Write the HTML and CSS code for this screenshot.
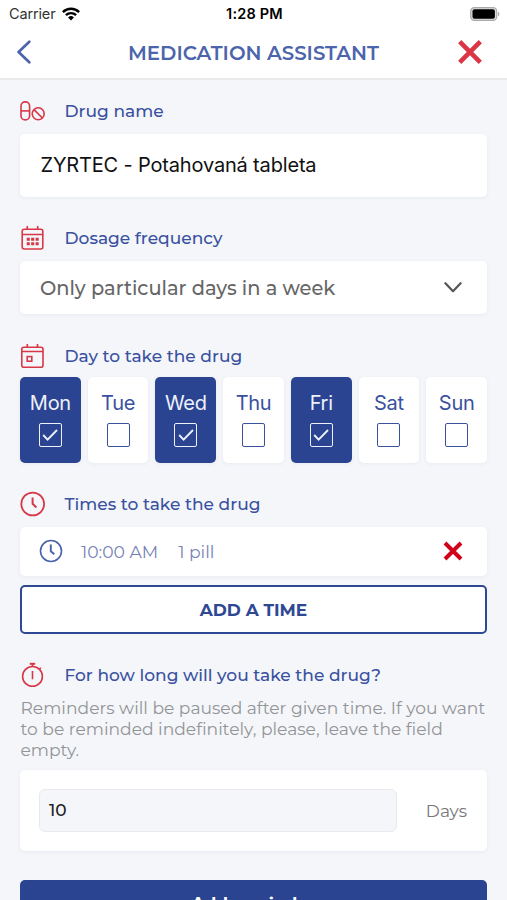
FILE: index.html
```html
<!DOCTYPE html>
<html lang="en">
<head>
<meta charset="utf-8">
<title>Medication assistant</title>
<link rel="stylesheet" href="styles.css">
</head>
<body>
<div class="screen">
  <header class="header">
    <div class="status">
      <div class="carrier">
        <span>Carrier</span>
        <svg width="18" height="14" viewBox="0 0 18 14" fill="none" stroke="#000" stroke-width="2.4"><path d="M.9 5.1a11.5 11.5 0 0 1 16.2 0M3.9 8.2a7.2 7.2 0 0 1 10.2 0"/><path d="M9 13.4 6.1 10.5a4.2 4.2 0 0 1 5.8 0z" fill="#000" stroke="none"/></svg>
      </div>
      <span class="clock">1:28 PM</span>
      <svg class="battery" width="30" height="14" viewBox="0 0 30 14"><rect x=".7" y=".7" width="26" height="12.6" rx="3.6" fill="#ddd" stroke="#aaa" stroke-width="1.2"/><rect x="2.5" y="2.3" width="22.4" height="9.4" rx="2" fill="#000"/><path d="M28 4.7c1.8.7 1.8 3.9 0 4.6z" fill="#aaa"/></svg>
    </div>
    <div class="nav">
      <svg class="back" width="16" height="24" viewBox="0 0 16 24" fill="none" stroke="#4c64ab" stroke-width="2.7" stroke-linecap="round" stroke-linejoin="round"><path d="M13.3 1.8 2.6 12l10.7 10.2"/></svg>
      <h1>MEDICATION ASSISTANT</h1>
      <svg width="24" height="24" viewBox="0 0 24 24" stroke="#dc3545" stroke-width="4.6"><path d="M1.7 1.7l20.6 20.6M22.3 1.7 1.7 22.3"/></svg>
    </div>
  </header>
  <main class="form">
    <h2 class="label label-drug">
      <svg width="25" height="20" viewBox="0 0 25 20" fill="none" stroke="#d73747" stroke-width="1.6"><rect x="1" y=".9" width="8.6" height="18" rx="4.2"/><path d="M1 9.9h8.6"/><circle cx="18.2" cy="12.8" r="6"/><path d="m14 8.6 8.4 8.4"/></svg>
      <span>Drug name</span>
    </h2>
    <div class="card drug">ZYRTEC - Potahovaná tableta</div>

    <h2 class="label label-frequency">
      <svg width="25" height="26" viewBox="0 0 25 26" fill="none" stroke="#d73747" stroke-width="1.6"><rect x="2.2" y="4.2" width="20.6" height="19.8" rx="2"/><path d="M2.2 9.5h20.6M7.3 1v3.2M17.7 1v3.2"/><path d="M6.7 14.3h12M6.7 18.8h12" stroke-width="3.1" stroke-dasharray="3.1 1.35"/></svg>
      <span>Dosage frequency</span>
    </h2>
    <div class="card select">
      <span>Only particular days in a week</span>
      <svg width="18" height="11" viewBox="0 0 18 11" fill="none" stroke="#555" stroke-width="2.2" stroke-linecap="round" stroke-linejoin="round"><path d="m1.4 1.2 7.6 8 7.6-8"/></svg>
    </div>

    <h2 class="label label-days">
      <svg width="25" height="26" viewBox="0 0 25 26" fill="none" stroke="#d73747" stroke-width="1.6"><rect x="1.8" y="4.2" width="21.2" height="20" rx="2"/><path d="M1.8 8.5H23M7.3 1v3.2M17.5 1v3.2"/><rect x="7.2" y="13.6" width="4.6" height="4.6"/></svg>
      <span>Day to take the drug</span>
    </h2>
    <div class="days">
      <div class="day on"><span>Mon</span><i class="box"><svg width="16" height="12" viewBox="0 0 16 12"><path d="m1.2 6 4.4 4.6L15 1"/></svg></i></div>
      <div class="day"><span>Tue</span><i class="box"></i></div>
      <div class="day on"><span>Wed</span><i class="box"><svg width="16" height="12" viewBox="0 0 16 12"><path d="m1.2 6 4.4 4.6L15 1"/></svg></i></div>
      <div class="day"><span>Thu</span><i class="box"></i></div>
      <div class="day on"><span>Fri</span><i class="box"><svg width="16" height="12" viewBox="0 0 16 12"><path d="m1.2 6 4.4 4.6L15 1"/></svg></i></div>
      <div class="day"><span>Sat</span><i class="box"></i></div>
      <div class="day"><span>Sun</span><i class="box"></i></div>
    </div>

    <h2 class="label label-times">
      <svg width="25" height="26" viewBox="0 0 25 26" fill="none" stroke="#d73747" stroke-width="1.8"><circle cx="12.7" cy="13" r="11.4"/><path d="M12.6 6.4v6.4l3.8 3.6" stroke-width="2"/></svg>
      <span>Times to take the drug</span>
    </h2>
    <div class="card time">
      <svg width="24" height="24" viewBox="0 0 24 24" fill="none" stroke="#4a62ab" stroke-width="1.6"><circle cx="12" cy="12" r="10.5"/><path d="M11.8 5.5v6.7l3.5 3" stroke-width="1.9"/></svg>
      <span class="hour">10:00 AM</span>
      <span>1 pill</span>
      <svg class="remove" width="20" height="20" viewBox="0 0 20 20" stroke="#d0021b" stroke-width="4"><path d="m2 2 16 16M18 2 2 18"/></svg>
    </div>
    <button class="add-time">ADD A TIME</button>

    <h2 class="label label-duration">
      <svg width="25" height="26" viewBox="0 0 25 26" fill="none" stroke="#d73747" stroke-width="1.6"><circle cx="12.5" cy="14.4" r="9.9"/><path d="M12.5 1.3v3.2M12.5 9v8.2M19.4 7.2l1.5-1.5"/><path d="M9.8 1.8h5.4" stroke-width="2"/></svg>
      <span>For how long will you take the drug?</span>
    </h2>
    <p class="hint">Reminders will be paused after given time. If you want to be reminded indefinitely, please, leave the field empty.</p>
    <div class="card duration">
      <div class="amount">10</div>
      <span>Days</span>
    </div>
    <button class="submit">Add reminder</button>
  </main>
</div>
</body>
</html>
```
FILE: styles.css
```css
* { box-sizing: border-box; }
body { margin: 0; font-family: Montserrat, Inter, sans-serif; }
svg { display: block; flex: none; }
.screen { width: 507px; height: 900px; overflow: hidden; background: #f4f6fa; }
.header { height: 80px; background: #fff; border-bottom: 2px solid #e9eaec; }
.status {
  display: grid; grid-template-columns: 1fr auto 1fr; align-items: center;
  height: 27px; padding: 0 7px 0 9px; font: 400 14.5px/27px Inter, sans-serif;
}
.carrier { display: flex; align-items: center; gap: 7px; color: #333; letter-spacing: -.15px; }
.clock { font-weight: 600; letter-spacing: .2px; }
.battery { justify-self: end; }
.nav { display: flex; align-items: center; justify-content: space-between; height: 50px; padding: 0 25px 0 16px; }
h1 { margin: 0; padding: 2px 0 0 17px; font-size: 19.75px; line-height: 24px; font-weight: 600; color: #4c64ab; }
.form { padding: 0 20px; }
.label {
  display: flex; align-items: center; gap: 19.5px; height: 26px;
  margin: 0; font-size: 17.05px; font-weight: 500; color: #3a51a0;
}
.label-drug { margin-top: 18px; }
.card { background: #fff; border-radius: 5px; box-shadow: 0 1px 4px rgba(40, 50, 90, .06); }
.drug {
  height: 63px; margin-top: 10px; padding-left: 20.5px;
  font: 400 20px/63px Inter, sans-serif; letter-spacing: -.17px; color: #111;
}
.label-frequency { margin-top: 28px; }
.select {
  display: flex; align-items: center; justify-content: space-between;
  height: 53px; margin-top: 10px; padding: 0 25px 0 20px;
  font-size: 19.4px; font-weight: 500; line-height: 24px; color: #666;
}
.label-days { margin-top: 29px; }
.days { display: grid; grid-template-columns: repeat(7, 1fr); gap: 7px; margin-top: 8px; }
.day {
  display: flex; flex-direction: column; align-items: center; height: 86px; padding-top: 14px;
  border-radius: 5px; background: #fff; color: #3a51a0;
  font: 400 20px/25px Inter, sans-serif; letter-spacing: -.3px; box-shadow: 0 1px 4px rgba(40, 50, 90, .06);
}
.day.on { background: #2a4492; color: #eef1fa; }
.box {
  display: flex; align-items: center; justify-content: center; width: 23px; height: 24px;
  margin-top: 7px; border: 1.5px solid currentColor; border-radius: 2px;
}
.box path { fill: none; stroke: currentColor; stroke-width: 1.9; }
.label-times { margin-top: 28px; }
.time {
  display: flex; align-items: center; height: 49px; margin-top: 10px; padding: 0 24px 1px 19px;
  font-size: 17.2px; color: #7883b5;
}
.hour { margin: 0 20px 0 18px; }
.remove { margin-left: auto; }
.add-time {
  display: block; width: 100%; height: 49px; margin-top: 9px; padding: 0;
  border: 2px solid #2f4894; border-radius: 5px; background: #fff;
  font: 700 17px/44px Montserrat, Inter, sans-serif; color: #2f4894;
}
.label-duration { margin-top: 28px; }
.hint { margin: 9px 0 0; padding-left: .5px; font-size: 17.13px; line-height: 21px; color: #939496; }
.duration {
  display: flex; align-items: center; justify-content: space-between;
  height: 81px; margin-top: 10px; padding: 0 20px 0 19px; font-size: 17px; color: #777;
}
.amount {
  width: 358px; height: 43px; padding-left: 9px; border: 1px solid #e9eaec; border-radius: 6px;
  background: #f5f6fa; font-weight: 500; font-size: 17px; line-height: 41px; color: #222;
}
.submit {
  display: block; width: 100%; height: 54px; margin-top: 29px; padding: 0 0 8px; border: 0;
  border-radius: 5px; background: #2a4492; color: #fff; font: 700 17px/46px Montserrat, Inter, sans-serif;
}
```
